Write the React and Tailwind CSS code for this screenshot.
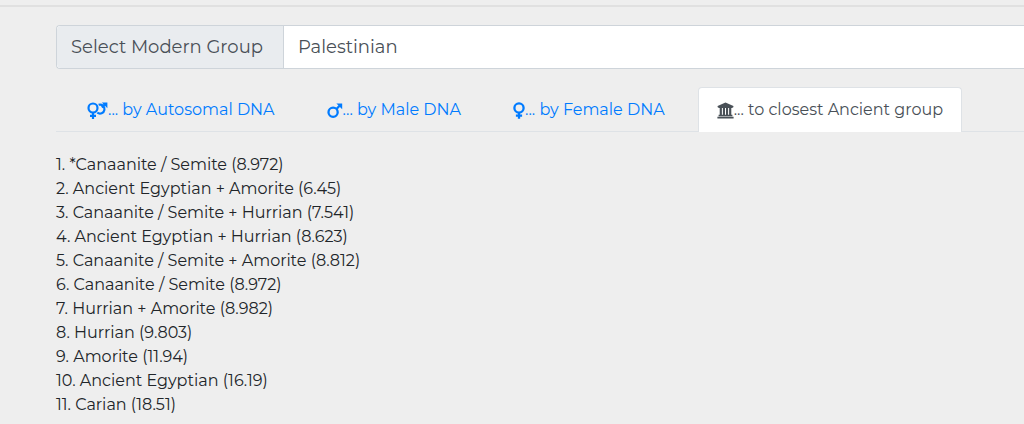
import React, { useState } from 'react';

const VenusMarsIcon = () => (
  <svg aria-hidden="true" viewBox="0 0 21 17" className="h-[17px] w-[21px]" fill="none" stroke="currentColor" strokeWidth="2.2">
    <circle cx="6" cy="6" r="4.5" />
    <path d="M6 10.5V17M3 13.8h6" />
    <path d="M11.6 2.8a4.5 4.5 0 1 1-1.3 7.9M14.8 5.4l3.6-3.6" />
    <path d="M14.8.6H20.4V6.2Z" fill="currentColor" stroke="none" />
  </svg>
);

const MarsIcon = () => (
  <svg aria-hidden="true" viewBox="0 0 16 17" className="h-[17px] w-4" fill="none" stroke="currentColor" strokeWidth="2.3">
    <circle cx="6.1" cy="10.3" r="4.6" />
    <path d="M9.2 7.2l4.4-4.4" />
    <path d="M9.4 1.4H15.2V7.2Z" fill="currentColor" stroke="none" />
  </svg>
);

const VenusIcon = () => (
  <svg aria-hidden="true" viewBox="0 0 12 17" className="h-[17px] w-3" fill="none" stroke="currentColor" strokeWidth="2.3">
    <circle cx="6" cy="6" r="4.6" />
    <path d="M6 10.6V16.8M2.9 13.7h6.2" />
  </svg>
);

const MuseumIcon = () => (
  <svg aria-hidden="true" viewBox="0 0 17 17" className="h-[17px] w-[17px]" fill="currentColor">
    <path d="M8.5.5L16.4 4V5.2H15.6V6H1.4V5.2H.6V4Z" />
    <path d="M2.7 6H4.9V13H2.7ZM5.9 6H8V13H5.9ZM9 6H11.1V13H9ZM12.1 6H14.3V13H12.1Z" />
    <path d="M1.6 12.8H15.4V14.2H1.6ZM.4 14.7H16.6V16.5H.4Z" />
  </svg>
);

const tabs = [
  { id: 'autosomal', label: '... by Autosomal DNA', Icon: VenusMarsIcon },
  { id: 'male', label: '... by Male DNA', Icon: MarsIcon },
  { id: 'female', label: '... by Female DNA', Icon: VenusIcon },
  { id: 'ancient', label: '... to closest Ancient group', Icon: MuseumIcon },
];

const results = [
  '*Canaanite / Semite (8.972)',
  'Ancient Egyptian + Amorite (6.45)',
  'Canaanite / Semite + Hurrian (7.541)',
  'Ancient Egyptian + Hurrian (8.623)',
  'Canaanite / Semite + Amorite (8.812)',
  'Canaanite / Semite (8.972)',
  'Hurrian + Amorite (8.982)',
  'Hurrian (9.803)',
  'Amorite (11.94)',
  'Ancient Egyptian (16.19)',
  'Carian (18.51)',
];

export default function App() {
  const [group, setGroup] = useState('Palestinian');
  const [activeTab, setActiveTab] = useState('ancient');

  return (
    <div className="min-h-screen overflow-hidden bg-[#eeeeee] font-[Montserrat,Inter,sans-serif] text-[#212529]">
      <div className="h-[7px] border-b-2 border-[#e0e0e0]" />
      <main className="pt-[18px] pl-14">
        <div className="flex h-11 rounded-l border border-r-0 border-[#ced4da] bg-white text-lg text-[#495057]">
          <label htmlFor="group" className="flex items-center rounded-l border-r border-[#ced4da] bg-[#e9ecef] pr-5 pl-[14px]">
            Select Modern Group
          </label>
          <select
            id="group"
            value={group}
            onChange={(e) => setGroup(e.target.value)}
            className="min-w-0 flex-1 appearance-none bg-white px-[14px] outline-none"
          >
            <option>Palestinian</option>
          </select>
        </div>

        <div role="tablist" className="mt-[18px] flex gap-[14px] border-b border-[#dee2e6] pl-3">
          {tabs.map(({ id, label, Icon }) => (
            <button
              key={id}
              role="tab"
              aria-selected={activeTab === id}
              onClick={() => setActiveTab(id)}
              className={`-mb-px flex h-[45px] items-center rounded-t border border-b-0 px-[18px] text-base whitespace-nowrap ${
                activeTab === id ? 'border-[#dee2e6] bg-white text-[#495057]' : 'border-transparent text-[#007bff]'
              }`}
            >
              <Icon />
              {label}
            </button>
          ))}
        </div>

        <ol className="pt-[21px] text-base leading-6">
          {results.map((item, index) => (
            <li key={item}>
              {index + 1}. {item}
            </li>
          ))}
        </ol>
      </main>
    </div>
  );
}
